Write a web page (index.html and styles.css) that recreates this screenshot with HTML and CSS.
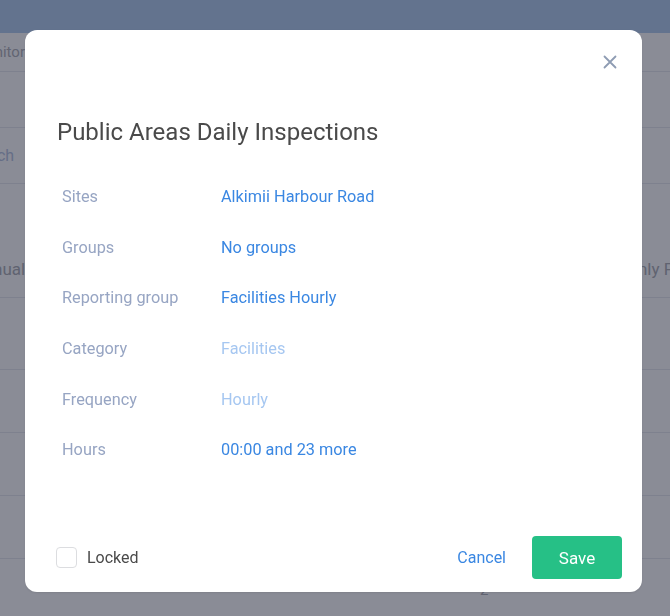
FILE: index.html
```html
<!DOCTYPE html>
<html lang="en">
<head>
    <meta charset="UTF-8">
    <meta name="viewport" content="width=device-width, initial-scale=1.0">
    <title>Public Areas Daily Inspections</title>
    <link rel="stylesheet" href="styles.css">
</head>
<body>
    <!-- Page behind the dialog -->
    <div class="topbar"></div>
    <div class="page">
        <div class="row row-a"><span class="cell cell-left">Monitoring</span></div>
        <div class="row row-b"></div>
        <div class="row row-c"><span class="cell cell-link">Search</span></div>
        <div class="row row-d">
            <span class="cell cell-head">Manual</span>
            <span class="cell cell-right">Only Facilities</span>
        </div>
        <div class="row row-e1"></div>
        <div class="row row-e"></div>
        <div class="row row-e"></div>
        <div class="row row-e"></div>
        <div class="row row-f"><span class="cell cell-count">2</span></div>
    </div>

    <!-- Dialog -->
    <div class="overlay">
        <div class="modal">
            <button class="close" aria-label="Close">
                <svg width="14" height="14" viewBox="0 0 14 14">
                    <path d="M1.5 1.5 L12.5 12.5 M12.5 1.5 L1.5 12.5" stroke="currentColor" stroke-width="1.8" stroke-linecap="round"/>
                </svg>
            </button>

            <h1 class="modal-title">Public Areas Daily Inspections</h1>

            <div class="details">
                <div class="detail"><span class="label">Sites</span><span class="value">Alkimii Harbour Road</span></div>
                <div class="detail"><span class="label">Groups</span><span class="value">No groups</span></div>
                <div class="detail"><span class="label">Reporting group</span><span class="value">Facilities Hourly</span></div>
                <div class="detail"><span class="label">Category</span><span class="value muted">Facilities</span></div>
                <div class="detail"><span class="label">Frequency</span><span class="value muted">Hourly</span></div>
                <div class="detail"><span class="label">Hours</span><span class="value">00:00 and 23 more</span></div>
            </div>

            <div class="modal-footer">
                <label class="lock">
                    <span class="checkbox"></span>
                    Locked
                </label>
                <div class="actions">
                    <button class="btn-cancel">Cancel</button>
                    <button class="btn-save">Save</button>
                </div>
            </div>
        </div>
    </div>
</body>
</html>
```

FILE: styles.css
```css
body {
    margin: 0;
    font-family: Roboto, "Liberation Sans", Arial, sans-serif;
    background-color: #ffffff;
    overflow: hidden;
    height: 616px;
}

/* background page */
.topbar {
    height: 33px;
    background-color: #b0cdef;
}
.page {
    display: flex;
    flex-direction: column;
}
.row {
    display: flex;
    align-items: center;
    border-bottom: 1px solid #e6e8ee;
    white-space: nowrap;
    overflow: hidden;
}
.row-a { height: 38px; }
.row-b { height: 55px; }
.row-c { height: 55px; }
.row-d { height: 114px; align-items: flex-end; padding-bottom: 18px; box-sizing: border-box; }
.row-e1 { height: 71px; }
.row-e { height: 62px; }
.row-f { height: 56px; border-bottom: none; align-items: flex-start; }
.cell {
    font-size: 15px;
    color: #aeb0b7;
}
.cell-left { margin-left: -27px; }
.cell-link { margin-left: -35px; font-size: 16px; color: #b5c3df; }
.cell-head { margin-left: -31px; font-size: 17px; color: #aaacb3; }
.cell-right { margin-left: 601px; font-size: 17px; color: #aaacb3; }
.cell-count { margin-left: 480px; margin-top: 22px; font-size: 15px; }

/* dialog */
.overlay {
    position: fixed;
    top: 0;
    left: 0;
    right: 0;
    bottom: 0;
    background-color: rgba(22, 26, 46, 0.5);
    padding: 30px 28px 0 25px;
}
.modal {
    position: relative;
    background-color: #fff;
    border-radius: 12px;
    height: 562px;
    box-sizing: border-box;
    padding: 0 20px 13px 32px;
    display: flex;
    flex-direction: column;
    box-shadow: 0 1px 2px rgba(0, 0, 0, 0.08);
}
.close {
    position: absolute;
    top: 24px;
    right: 24px;
    width: 16px;
    height: 16px;
    padding: 0;
    border: none;
    background: none;
    color: #8e9cb3;
    display: flex;
    align-items: center;
    justify-content: center;
    cursor: pointer;
}
.modal-title {
    margin: 86px 0 23.5px;
    font-size: 24px;
    line-height: 32px;
    font-weight: 400;
    color: #4a4a4a;
}
.details {
    padding-left: 5px;
}
.detail {
    display: flex;
    align-items: center;
    height: 50.6px;
    font-size: 16.3px;
}
.label {
    width: 159px;
    color: #97a5c3;
}
.value {
    color: #3a87e2;
}
.value.muted {
    color: #a6c7f1;
}
.modal-footer {
    margin-top: auto;
    display: flex;
    align-items: center;
    justify-content: space-between;
}
.lock {
    display: flex;
    align-items: center;
    gap: 10px;
    font-size: 16px;
    color: #4a4a4a;
    margin-left: -1px;
}
.checkbox {
    width: 19px;
    height: 19px;
    border: 1px solid #dcdde0;
    border-radius: 4px;
}
.actions {
    display: flex;
    align-items: center;
    gap: 26px;
}
.btn-cancel {
    border: none;
    background: none;
    padding: 0;
    font-family: inherit;
    font-size: 16px;
    color: #3a87e2;
    cursor: pointer;
}
.btn-save {
    width: 90px;
    height: 43px;
    border: none;
    border-radius: 4px;
    background-color: #26c086;
    color: #fff;
    font-family: inherit;
    font-size: 17px;
    cursor: pointer;
}
```
